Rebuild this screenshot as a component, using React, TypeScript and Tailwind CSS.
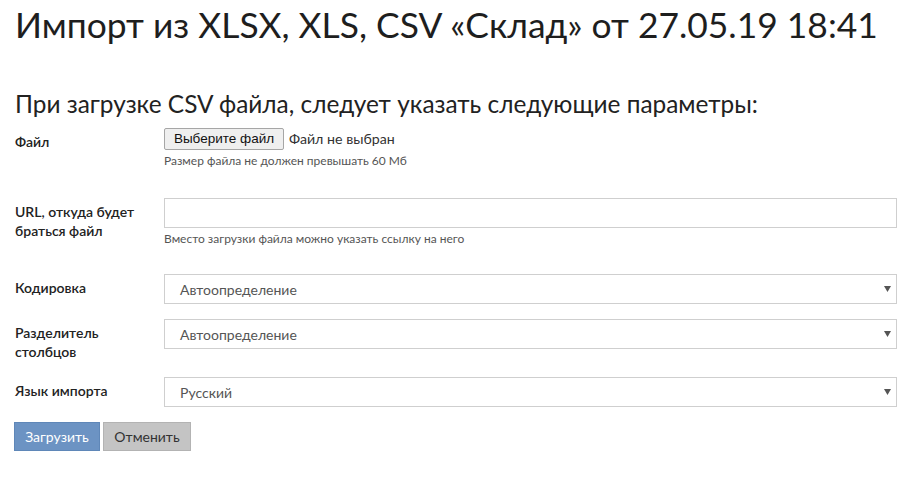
import React from 'react'

function Hint({ children }: { children: React.ReactNode }) {
  return <div className="mt-[3px] text-[12px] leading-[16px] text-[#555]">{children}</div>
}

function Label({ children }: { children: React.ReactNode }) {
  return (
    <div className="w-[149px] shrink-0 pt-[4px] pr-3 text-[14px] leading-[19px] font-semibold text-[#222]">
      {children}
    </div>
  )
}

function Select({ value }: { value: string }) {
  return (
    <div className="relative flex h-[30px] items-center border border-[#cfcfcf] bg-white pl-[15px] text-[14px] text-[#555]">
      {value}
      <svg className="absolute right-[5px] top-[11px] h-[6px] w-[7px]" viewBox="0 0 7 6">
        <path d="M0 0h7L3.5 6z" fill="#555" />
      </svg>
    </div>
  )
}

export default function App() {
  return (
    <div className="min-h-screen bg-white pl-[15px] pr-[13px] pt-[5px] font-['Lato','Open_Sans',sans-serif] text-[#222]">
      <h1 className="text-[35.4px] leading-[40px] font-normal text-[#1e1e1e]">
        Импорт из XLSX, XLS, CSV «Склад» от 27.05.19 18:41
      </h1>

      <h2 className="mt-[44px] text-[24.4px] leading-[30px] font-normal text-[#222]">
        При загрузке CSV файла, следует указать следующие параметры:
      </h2>

      <form className="mt-[9px]">
        {/* Файл */}
        <div className="mb-[29px] flex items-start">
          <Label>Файл</Label>
          <div className="flex-1">
            <div className="flex h-[22px] items-center">
              <button
                type="button"
                className="h-[22px] w-[120px] rounded-[2px] border border-[#a6a6a6] bg-[#efefef] font-['Liberation_Sans',Arial,sans-serif] text-[13.5px] text-[#111]"
              >
                Выберите файл
              </button>
              <span className="ml-[5px] text-[14.2px] text-[#333]">Файл не выбран</span>
            </div>
            <Hint>Размер файла не должен превышать 60 Мб</Hint>
          </div>
        </div>

        {/* URL */}
        <div className="mb-[27px] flex items-start">
          <Label>
            URL, откуда будет
            <br />
            браться файл
          </Label>
          <div className="flex-1">
            <input type="text" className="block h-[30px] w-full border border-[#cfcfcf] bg-white px-[15px] text-[14px] outline-none" />
            <Hint>Вместо загрузки файла можно указать ссылку на него</Hint>
          </div>
        </div>

        <div className="mb-[15px] flex items-start">
          <Label>Кодировка</Label>
          <div className="flex-1">
            <Select value="Автоопределение" />
          </div>
        </div>

        <div className="mb-[16px] flex items-start">
          <Label>
            Разделитель
            <br />
            столбцов
          </Label>
          <div className="flex-1">
            <Select value="Автоопределение" />
          </div>
        </div>

        <div className="mb-[15px] flex items-start">
          <Label>Язык импорта</Label>
          <div className="flex-1">
            <Select value="Русский" />
          </div>
        </div>

        <div className="-ml-px flex gap-[3px]">
          <button type="button" className="h-[29px] w-[86px] border border-[#5f87b8] bg-[#6c93c3] text-[14px] text-white">
            Загрузить
          </button>
          <button type="button" className="h-[29px] w-[88px] border border-[#b3b3b3] bg-[#c4c4c4] text-[14px] text-[#333]">
            Отменить
          </button>
        </div>
      </form>
    </div>
  )
}
